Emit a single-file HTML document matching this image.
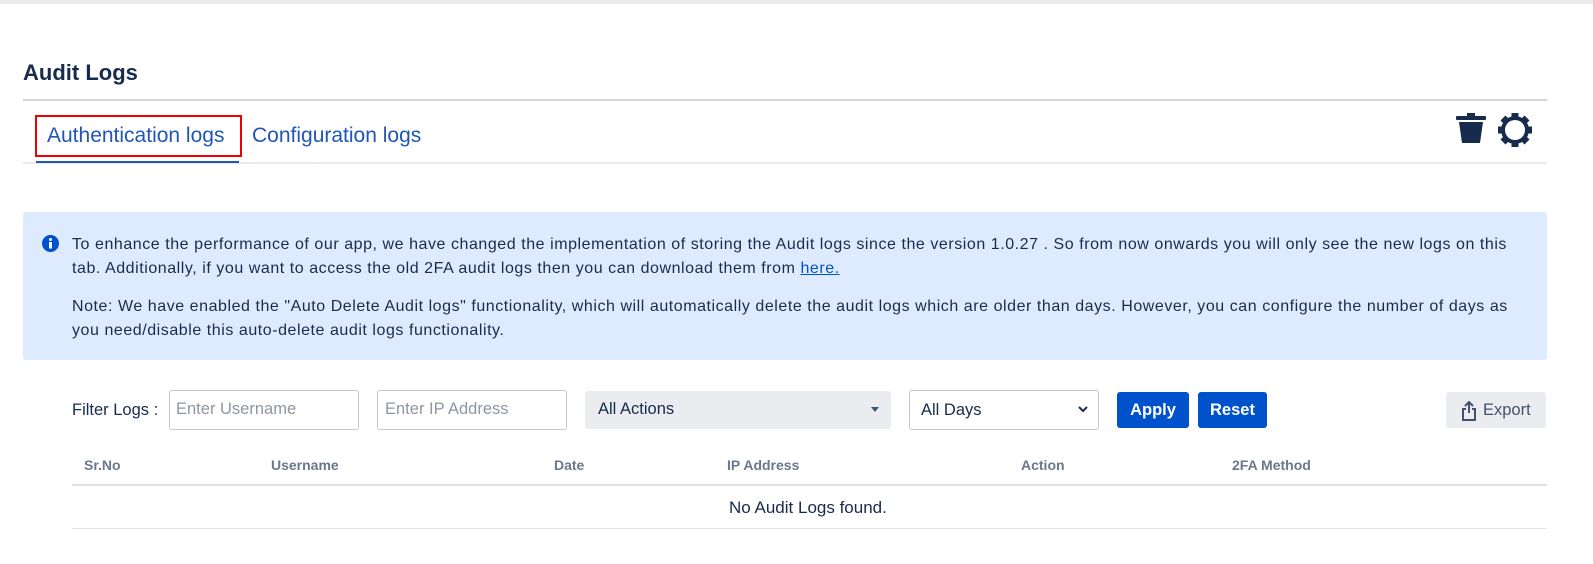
<!DOCTYPE html>
<html><head><meta charset="utf-8"><style>
body{margin:0;width:1593px;height:564px;background:#fff;font-family:"Liberation Sans",Arial,sans-serif;position:relative;overflow:hidden;color:#172b4d}
.a{position:absolute;white-space:nowrap}
</style></head><body>
<div class="a" style="left:0;top:0;width:1593px;height:4px;background:#ececec"></div>
<div class="a" style="left:23px;top:60px;font-size:22px;font-weight:bold;color:#172b4d">Audit Logs</div>
<div class="a" style="left:23px;top:99px;width:1524px;height:2px;background:#d6d6d6"></div>
<div class="a" style="left:35px;top:115px;width:207px;height:42px;border:2px solid #e00;box-sizing:border-box"></div>
<div class="a" style="left:47px;top:124px;font-size:21px;color:#1f56b8">Authentication logs</div>
<div class="a" style="left:252px;top:124px;font-size:21px;color:#1f56b8">Configuration logs</div>
<div class="a" style="left:23px;top:162px;width:1524px;height:2px;background:#e8e8e8"></div>
<div class="a" style="left:36px;top:161px;width:203px;height:2px;background:#1f56b8"></div>
<svg class="a" style="left:1455px;top:113px" width="32" height="32" viewBox="0 0 32 32"><rect x="1" y="3" width="30" height="4" rx="1" fill="#172b4d"/><rect x="12" y="0" width="8" height="4" fill="#172b4d"/><path d="M4 9 H28 L25 30 H7 Z" fill="#172b4d"/></svg>
<svg class="a" style="left:1497px;top:112px" width="36" height="36" viewBox="0 0 36 36"><g fill="#172b4d"><circle cx="18" cy="18" r="14"/><g id="t"><rect x="14.5" y="1" width="7" height="6"/></g><use href="#t" transform="rotate(45 18 18)"/><use href="#t" transform="rotate(90 18 18)"/><use href="#t" transform="rotate(135 18 18)"/><use href="#t" transform="rotate(180 18 18)"/><use href="#t" transform="rotate(225 18 18)"/><use href="#t" transform="rotate(270 18 18)"/><use href="#t" transform="rotate(315 18 18)"/></g><circle cx="18" cy="18" r="10" fill="#fff"/></svg>
<div class="a" style="left:23px;top:212px;width:1524px;height:148px;background:#deebff;border-radius:3px"></div>
<svg class="a" style="left:42px;top:235px" width="17" height="17" viewBox="0 0 17 17"><circle cx="8.5" cy="8.5" r="8.5" fill="#0052cc"/><circle cx="8.5" cy="4.5" r="1.5" fill="#fff"/><rect x="7" y="7" width="3" height="6.5" fill="#fff"/></svg>
<div class="a" style="left:72px;top:233px;font-size:16px;letter-spacing:0.55px;line-height:24px;color:#172b4d">To enhance the performance of our app, we have changed the implementation of storing the Audit logs since the version 1.0.27 . So from now onwards you will only see the new logs on this<br>tab. Additionally, if you want to access the old 2FA audit logs then you can download them from <span style="color:#0052cc;text-decoration:underline">here.</span></div>
<div class="a" style="left:72px;top:295px;font-size:16px;letter-spacing:0.55px;line-height:24px;color:#172b4d">Note: We have enabled the "Auto Delete Audit logs" functionality, which will automatically delete the audit logs which are older than days. However, you can configure the number of days as<br>you need/disable this auto-delete audit logs functionality.</div>
<div class="a" style="left:72px;top:401px;font-size:16.5px;color:#172b4d">Filter Logs :</div>
<div class="a" style="left:169px;top:390px;width:190px;height:40px;border:1px solid #c6c6c6;border-radius:3px;box-sizing:border-box;font-size:16.5px;color:#8f96a3;padding:9px 0 0 6px">Enter Username</div>
<div class="a" style="left:377px;top:390px;width:190px;height:40px;border:1px solid #c6c6c6;border-radius:3px;box-sizing:border-box;font-size:16.5px;color:#8f96a3;padding:9px 0 0 7px">Enter IP Address</div>
<div class="a" style="left:585px;top:391px;width:306px;height:38px;background:#ebecf0;border-radius:3px;box-sizing:border-box;font-size:16.5px;color:#172b4d;padding:9px 0 0 13px">All Actions<span style="position:absolute;right:12px;top:16px;border-left:4px solid transparent;border-right:4px solid transparent;border-top:5px solid #42526e"></span></div>
<div class="a" style="left:909px;top:390px;width:190px;height:40px;border:1px solid #c6c6c6;border-radius:3px;box-sizing:border-box;font-size:16.5px;color:#172b4d;padding:10px 0 0 11px">All Days<svg style="position:absolute;right:10px;top:15px" width="10" height="7" viewBox="0 0 10 7"><path d="M1 1 L5 5 L9 1" stroke="#172b4d" stroke-width="2" fill="none"/></svg></div>
<div class="a" style="left:1117px;top:392px;width:72px;height:36px;background:#0052cc;border-radius:3px;color:#fff;font-weight:bold;font-size:16.5px;text-align:center;line-height:36px">Apply</div>
<div class="a" style="left:1198px;top:392px;width:69px;height:36px;background:#0052cc;border-radius:3px;color:#fff;font-weight:bold;font-size:16.5px;text-align:center;line-height:36px">Reset</div>
<div class="a" style="left:1446px;top:392px;width:100px;height:36px;background:#ebecf0;border-radius:3px;color:#42526e;font-size:16.5px;line-height:36px;padding-left:37px;box-sizing:border-box">Export</div>
<svg class="a" style="left:1461px;top:401px" width="16" height="20" viewBox="0 0 16 20"><path d="M8 1 V12 M4 5 L8 1 L12 5" stroke="#42526e" stroke-width="2" fill="none"/><path d="M5 8 H2 V19 H14 V8 H11" stroke="#42526e" stroke-width="2" fill="none"/></svg>
<div class="a" style="top:457px;left:84px;font-size:14px;font-weight:bold;color:#6b778c">Sr.No</div>
<div class="a" style="top:457px;left:271px;font-size:14px;font-weight:bold;color:#6b778c">Username</div>
<div class="a" style="top:457px;left:554px;font-size:14px;font-weight:bold;color:#6b778c">Date</div>
<div class="a" style="top:457px;left:727px;font-size:14px;font-weight:bold;color:#6b778c">IP Address</div>
<div class="a" style="top:457px;left:1021px;font-size:14px;font-weight:bold;color:#6b778c">Action</div>
<div class="a" style="top:457px;left:1232px;font-size:14px;font-weight:bold;color:#6b778c">2FA Method</div>
<div class="a" style="left:72px;top:484px;width:1475px;height:2px;background:#dfe1e6"></div>
<div class="a" style="left:729px;top:498px;font-size:17px;color:#172b4d">No Audit Logs found.</div>
<div class="a" style="left:72px;top:528px;width:1475px;height:1px;background:#e4e4e4"></div>
</body></html>
